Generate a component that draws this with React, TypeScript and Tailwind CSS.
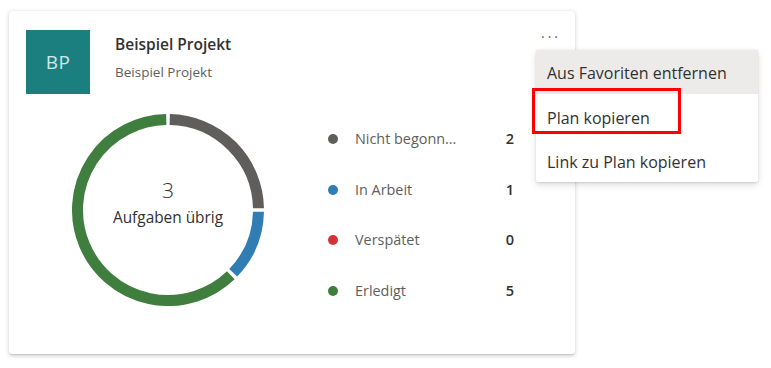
import React from "react";

const CX = 96;
const CY = 96;
const R = 90.5;

function arc(startDeg: number, endDeg: number) {
  const toXY = (d: number) => {
    const a = ((d - 90) * Math.PI) / 180;
    return [CX + R * Math.cos(a), CY + R * Math.sin(a)];
  };
  const [x1, y1] = toXY(startDeg);
  const [x2, y2] = toXY(endDeg);
  const large = endDeg - startDeg > 180 ? 1 : 0;
  return `M ${x1} ${y1} A ${R} ${R} 0 ${large} 1 ${x2} ${y2}`;
}

const legend = [
  { label: "Nicht begonn...", value: 2, color: "bg-[#5f5e5d]" },
  { label: "In Arbeit", value: 1, color: "bg-[#2f7db3]" },
  { label: "Verspätet", value: 0, color: "bg-[#d13438]" },
  { label: "Erledigt", value: 5, color: "bg-[#3f7e3f]" },
];

export default function App() {
  const g = 1.1;
  return (
    <div
      className="relative w-[771px] h-[368px] bg-white overflow-hidden"
      style={{ fontFamily: '"Open Sans", "Noto Sans", sans-serif' }}
    >
      <div className="ml-[9px] mt-[11px] w-[566px] h-[343px] bg-white rounded-[3px] shadow-[0_1.6px_4px_rgba(0,0,0,0.18),0_0.3px_1px_rgba(0,0,0,0.1)] pl-[17px] pt-[19px] flex flex-col">
        <div className="flex items-start h-[64px]">
          <div className="w-[64px] h-[64px] bg-[#1b7f80] flex items-center justify-center text-[#cfe8e8] text-[19px] tracking-[0.5px]">
            BP
          </div>
          <div className="ml-[25px] flex flex-col">
            <div className="text-[15.5px] font-semibold text-[#323130] leading-[20px] mt-[4px]">
              Beispiel Projekt
            </div>
            <div className="text-[13.5px] text-[#605e5c] leading-[18px] mt-[9px]">
              Beispiel Projekt
            </div>
          </div>
          <div className="ml-auto mr-[14px] text-[#605e5c] text-[14px] leading-[14px] tracking-[3px]">
            ···
          </div>
        </div>
        <div className="flex items-start mt-[20px]">
          <div className="relative ml-[46px] w-[192px] h-[192px]">
            <svg width="192" height="192" viewBox="0 0 192 192">
              <path d={arc(0 + g, 90 - g)} stroke="#5f5e5d" strokeWidth="11" fill="none" />
              <path d={arc(90 + g, 135 - g)} stroke="#2f7db3" strokeWidth="11" fill="none" />
              <path d={arc(135 + g, 360 - g)} stroke="#3f7e3f" strokeWidth="11" fill="none" />
            </svg>
            <div className="absolute inset-0 flex flex-col items-center justify-center pb-[16px]">
              <div className="text-[21px] leading-[26px] text-[#323130] font-light">3</div>
              <div className="text-[15.4px] leading-[20px] text-[#323130] mt-[5px]">Aufgaben übrig</div>
            </div>
          </div>
          <div className="ml-[64px] w-[186px] flex flex-col mt-[13px] gap-[26.6px]">
            {legend.map((l) => (
              <div key={l.label} className="flex items-center h-[24px]">
                <div className={`w-[10px] h-[10px] rounded-full ${l.color}`} />
                <div className="ml-[17px] text-[14.4px] text-[#605e5c]">{l.label}</div>
                <div className="ml-auto text-[14.5px] font-semibold text-[#323130]">{l.value}</div>
              </div>
            ))}
          </div>
        </div>
      </div>

      <div className="absolute left-[536px] top-[50px] w-[222px] bg-white shadow-[0_3px_7px_rgba(0,0,0,0.13),0_0.6px_2px_rgba(0,0,0,0.11)] rounded-[2px] flex flex-col text-[16px] text-[#323130]">
        <div className="h-[44px] flex items-center pl-[11px] pt-[2px] bg-[#edebe9]">Aus Favoriten entfernen</div>
        <div className="h-[44px] flex items-center pl-[11px] pt-[3px]">Plan kopieren</div>
        <div className="h-[44px] flex items-center pl-[11px] pt-[3px]">Link zu Plan kopieren</div>
      </div>
      <div className="absolute left-[532px] top-[88px] w-[149px] h-[46px] border-[3px] border-[#ff0000]" />
    </div>
  );
}
